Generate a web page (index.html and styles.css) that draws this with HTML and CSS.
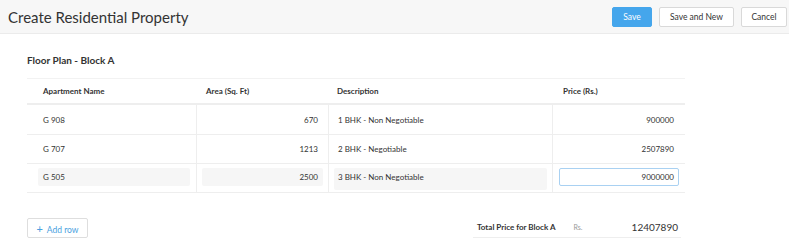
FILE: index.html
```html
<!DOCTYPE html>
<html lang="en">
<head>
    <meta charset="UTF-8">
    <meta name="viewport" content="width=device-width, initial-scale=1.0">
    <title>Create Residential Property</title>
    <link rel="stylesheet" href="styles.css">
</head>
<body>
    <div class="top-bar">
        <h1 class="page-title">Create Residential Property</h1>
        <div class="actions">
            <button class="btn btn-primary">Save</button>
            <button class="btn btn-new">Save and New</button>
            <button class="btn btn-cancel">Cancel</button>
        </div>
    </div>

    <div class="content">
        <h2 class="section-title">Floor Plan - Block A</h2>

        <div class="plan-table">
            <div class="row head">
                <div class="cell"><span class="val">Apartment Name</span></div>
                <div class="cell"><span class="val">Area (Sq. Ft)</span></div>
                <div class="cell"><span class="val">Description</span></div>
                <div class="cell"><span class="val">Price (Rs.)</span></div>
            </div>
            <div class="row first">
                <div class="cell"><span class="val">G 908</span></div>
                <div class="cell num"><span class="val">670</span></div>
                <div class="cell"><span class="val">1 BHK - Non Negotiable</span></div>
                <div class="cell num"><span class="val">900000</span></div>
            </div>
            <div class="row">
                <div class="cell"><span class="val">G 707</span></div>
                <div class="cell num"><span class="val">1213</span></div>
                <div class="cell"><span class="val">2 BHK - Negotiable</span></div>
                <div class="cell num"><span class="val">2507890</span></div>
            </div>
            <div class="row editing">
                <div class="cell"><span class="val field">G 505</span></div>
                <div class="cell num"><span class="val field">2500</span></div>
                <div class="cell"><span class="val field tall">3 BHK - Non Negotiable</span></div>
                <div class="cell num"><span class="val field focus">9000000</span></div>
            </div>
        </div>

        <div class="footer">
            <button class="add-row"><span class="plus">+</span> Add row</button>
            <div class="total">
                <span class="total-label">Total Price for Block A</span>
                <span class="currency">Rs.</span>
                <span class="total-amount">12407890</span>
            </div>
        </div>
    </div>
</body>
</html>
```

FILE: styles.css
```css
body {
    margin: 0;
    font-family: 'Lato', 'Open Sans', sans-serif;
    color: #333;
    background: white;
}
.top-bar {
    display: flex;
    justify-content: space-between;
    align-items: center;
    height: 33px;
    padding: 0 2px 0 8px;
    background: #f7f7f7;
    border-bottom: 1px solid #ebebeb;
}
.page-title {
    margin: 0;
    font-size: 15px;
    font-weight: 400;
    color: #333;
}
.actions {
    display: flex;
    gap: 7px;
}
.btn {
    height: 20px;
    padding: 0;
    font-family: inherit;
    font-size: 8.5px;
    color: #333;
    background: white;
    border: 1px solid #d9d9d9;
    border-radius: 2px;
}
.btn-primary {
    width: 40px;
    background: #45a6ec;
    border-color: #45a6ec;
    color: white;
}
.btn-new {
    width: 75px;
}
.btn-cancel {
    width: 46px;
}
.content {
    width: 658px;
    padding-left: 27px;
}
.section-title {
    margin: 20px 0 12px;
    font-size: 10px;
    font-weight: 700;
    color: #333;
}
.plan-table {
    border-top: 1px solid #f2f2f2;
}
.row {
    display: grid;
    grid-template-columns: 169px 132px 224px 133px;
    height: 28px;
    border-bottom: 1px solid #eeeeee;
}
.row.first {
    height: 29px;
}
.row.head {
    height: 24px;
    border-bottom: 2px solid #eeeeee;
    font-weight: 700;
}
.cell {
    display: flex;
    align-items: center;
    padding: 0 5px;
    font-size: 8px;
}
.row .cell + .cell {
    border-left: 1px solid #eeeeee;
}
.row.head .cell + .cell {
    border-left: none;
}
.cell:first-child {
    padding-left: 11px;
    padding-right: 6px;
}
.cell:last-child {
    padding-left: 6px;
    padding-right: 6px;
}
.val {
    flex: 1;
    box-sizing: border-box;
    padding: 0 5px;
    line-height: 18px;
}
.cell:nth-child(3) .val {
    padding-left: 4px;
}
.num .val {
    text-align: right;
}
.field {
    background: #f6f6f6;
    border-radius: 2px;
}
.field.focus {
    background: white;
    border: 1px solid #a9d1f2;
    line-height: 16px;
    padding-right: 4px;
}
.row.editing .cell {
    align-items: flex-start;
    padding-top: 4px;
}
.field.tall {
    height: 22px;
}
.footer {
    display: flex;
    justify-content: space-between;
    align-items: flex-end;
    margin-top: 24px;
}
.add-row {
    width: 61px;
    height: 20px;
    padding: 0;
    font-family: inherit;
    font-size: 8.5px;
    color: #4a9fe0;
    background: white;
    border: 1px solid #dedede;
    border-radius: 2px;
}
.plus {
    font-size: 11px;
    margin-right: 2px;
}
.total {
    display: flex;
    align-items: center;
    box-sizing: border-box;
    width: 208px;
    height: 21px;
    margin-right: 4px;
    padding: 0 3px 0 4px;
    border-bottom: 1px solid #eeeeee;
}
.total-label {
    font-size: 8px;
    font-weight: 700;
}
.currency {
    margin-left: 18px;
    font-size: 7px;
    color: #999;
}
.total-amount {
    margin-left: auto;
    font-size: 10px;
}
```
